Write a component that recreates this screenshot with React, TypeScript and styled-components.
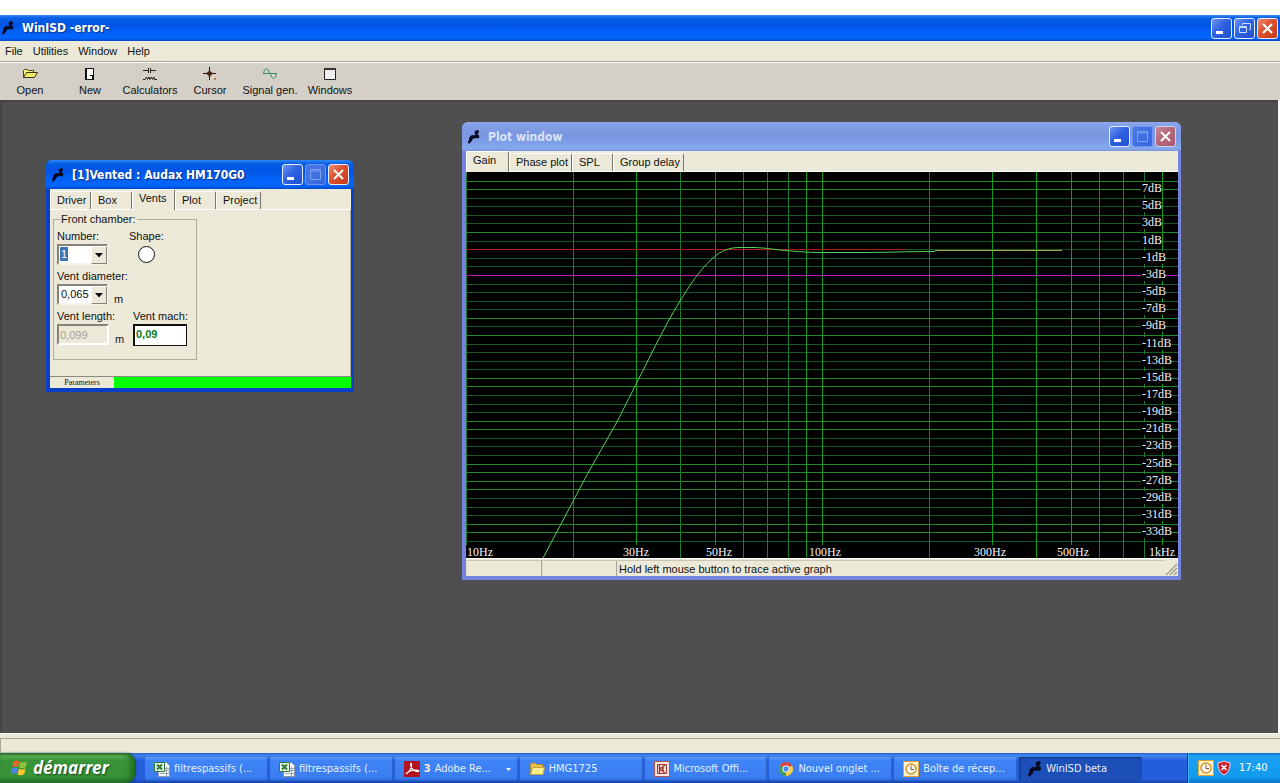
import React from "react";
import styled, { createGlobalStyle, css } from "styled-components";

const UI = '"Liberation Sans", Arial, sans-serif';
const TAHOMA = '"DejaVu Sans Condensed", Tahoma, sans-serif';
const FACE = "#ece9d8";

const GlobalStyle = createGlobalStyle`
  * { box-sizing: border-box; }
  body { margin: 0; background: #fff; font: 11px/14px ${UI}; color: #111; }
  button, input, select { font: inherit; color: inherit; margin: 0; }
`;

const Screen = styled.div`
  display: flex;
  flex-direction: column;
  min-height: 100vh;
  padding-top: 15px;
`;

/* ---------- window chrome ---------- */

const TitleBar = styled.header<{ $inactive?: boolean; $main?: boolean }>`
  display: flex;
  align-items: center;
  gap: 8px;
  height: ${(p) => (p.$main ? 26 : 29)}px;
  padding: 0 2px 0 ${(p) => (p.$main ? 2 : 3)}px;
  background: ${(p) =>
    p.$inactive
      ? "linear-gradient(#8fa9ec 0, #84a0ea 10%, #7a96df 40%, #7d9be6 65%, #86a9ec 90%, #7a94dd)"
      : "linear-gradient(#2f8bf5 0, #0a5fe8 12%, #0054e3 35%, #0361f8 65%, #0466fd 88%, #0048cc)"};
`;

const TitleText = styled.h1<{ $inactive?: boolean }>`
  flex: 1;
  margin: 0;
  font: bold 12px/16px ${TAHOMA};
  white-space: nowrap;
  color: ${(p) => (p.$inactive ? "#d8e4f8" : "#fff")};
  text-shadow: ${(p) => (p.$inactive ? "none" : "1px 1px 1px #0a2f8a")};
`;

const Controls = styled.div`
  display: flex;
  gap: 2px;
`;

const ControlButton = styled.button<{ $tone: "blue" | "dim" | "red" | "faded" }>`
  display: grid;
  place-items: center;
  width: 21px;
  height: 21px;
  padding: 0;
  border: 1px solid ${(p) => (p.$tone === "dim" ? "#6f93ee" : p.$tone === "faded" ? "#cfd2f0" : "#e6eeff")};
  border-radius: 3px;
  background: ${(p) =>
    ({
      blue: "linear-gradient(135deg, #6f95f2, #2f62e0 45%, #1f4fd0)",
      dim: "linear-gradient(135deg, #4a78e8, #3767dc)",
      red: "linear-gradient(135deg, #ea8d70, #dc5030 45%, #c23a18)",
      faded: "linear-gradient(135deg, #c58a9c, #b5687a 45%, #a85a70)",
    })[p.$tone]};
`;

const Frame = styled.section<{ $inactive?: boolean; $left: number; $top: number }>`
  position: absolute;
  left: ${(p) => p.$left}px;
  top: ${(p) => p.$top}px;
  overflow: hidden;
  border-radius: 6px 6px 0 0;
  padding: 0 3px 4px 4px;
  background: ${(p) => (p.$inactive ? "#7484dc" : "#0a3fc8")};
  ${TitleBar} {
    margin: 0 -3px 0 -4px;
    padding-left: 6px;
    padding-right: 5px;
  }
`;

const Client = styled.div`
  background: ${FACE};
`;

/* ---------- main window ---------- */

const MenuBar = styled.nav`
  display: flex;
  gap: 10px;
  height: 20px;
  padding: 0 5px;
  background: ${FACE};
`;

const MenuItem = styled.button`
  padding: 0;
  border: 0;
  background: none;
  line-height: 18px;
`;

const ToolBar = styled.div`
  display: grid;
  grid-auto-flow: column;
  grid-auto-columns: 60px;
  height: 39px;
  border-top: 1px solid #aca899;
  background: #d4d0c8;
  box-shadow: inset 0 1px #fff;
`;

const ToolButton = styled.button`
  display: flex;
  flex-direction: column;
  align-items: center;
  gap: 2px;
  padding: 5px 0 0;
  border: 0;
  background: none;
  white-space: nowrap;
`;

const Workspace = styled.main`
  position: relative;
  flex: 1;
  min-height: 500px;
  border: solid #fff;
  border-width: 0 2px 0 0;
  background: #4f4f4f;
  box-shadow: inset 2px 2px #45443f;
`;

const MainStatus = styled.footer`
  height: 20px;
  padding-top: 4px;
  background: ${FACE};
  border-top: 1px solid #fff;
  &::before {
    content: "";
    display: block;
    height: 15px;
    border: solid #aca899;
    border-width: 1px 0 0 1px;
  }
`;

/* ---------- tabs ---------- */

const Tabs = styled.div`
  display: flex;
  align-items: flex-end;
  height: 21px;
  border-bottom: 1px solid #fff;
`;

const Tab = styled.button<{ $active?: boolean }>`
  min-width: ${(p) => (p.$active ? 43 : 41)}px;
  height: ${(p) => (p.$active ? 21 : 18)}px;
  padding: 0 3px ${(p) => (p.$active ? 3 : 0)}px 6px;
  border: solid;
  border-width: 1px 1px 0 1px;
  border-color: #fff #77756a transparent #fff;
  border-radius: 2px 2px 0 0;
  background: ${FACE};
  text-align: left;
  line-height: 17px;
  white-space: nowrap;
  ${(p) => p.$active && css`margin-bottom: -1px;`}
`;

/* ---------- project window ---------- */

const ProjectPane = styled.div`
  width: 301px;
  height: 166px;
  padding: 2px 3px 0;
  border-right: 1px solid #aca899;
`;

const Group = styled.fieldset`
  display: flex;
  flex-direction: column;
  gap: 4px;
  width: 144px;
  margin: 0;
  padding: 3px 3px 13px;
  border: 1px solid #b0ad9c;
`;

const GroupLegend = styled.legend`
  margin-left: 3px;
  padding: 0 1px;
`;

const FieldRow = styled.div`
  display: flex;
`;

const Field = styled.div<{ $width?: number; $center?: boolean }>`
  display: flex;
  flex-direction: column;
  gap: 1px;
  width: ${(p) => (p.$width ? p.$width + "px" : "auto")};
  align-items: ${(p) => (p.$center ? "center" : "flex-start")};
  white-space: nowrap;
`;

const WithUnit = styled.div`
  display: flex;
  align-items: flex-end;
  gap: 6px;
  height: 21px;
  line-height: 12px;
`;

const Combo = styled.div`
  position: relative;
  width: 51px;
  height: 21px;
`;

const ComboSelect = styled.select<{ $highlight?: boolean }>`
  appearance: none;
  width: 100%;
  height: 100%;
  padding: 0 0 1px 2px;
  border: 2px solid;
  border-color: #85837a #f6f4ec #f6f4ec #85837a;
  border-radius: 0;
  outline: 0;
  line-height: 16px;
  color: ${(p) => (p.$highlight ? "#fff" : "#111")};
  background: ${(p) =>
    p.$highlight ? "linear-gradient(#3f74b8, #3f74b8) 1px 1px / 8px 14px no-repeat #fff" : "#fff"};
`;

const ComboArrow = styled.span`
  position: absolute;
  top: 2px;
  right: 1px;
  display: grid;
  place-items: center;
  width: 16px;
  height: 18px;
  pointer-events: none;
  border: 1px solid;
  border-color: #fff #85837a #85837a #fff;
  background: ${FACE};
`;

const LengthInput = styled.input`
  width: 52px;
  height: 21px;
  padding: 0 1px;
  border: 2px solid;
  border-color: #85837a #fff #fff #85837a;
  background: ${FACE};
  color: #a5a294;
`;

const MachInput = styled.input`
  width: 54px;
  height: 22px;
  padding: 0 1px 3px;
  border: solid #111;
  border-width: 2px 1px 1px 2px;
  background: #fff;
  color: #0a7a1a;
  font-weight: bold;
`;

const ShapeButton = styled.button`
  width: 17px;
  height: 17px;
  margin-top: 2px;
  padding: 0;
  border: 1px solid #111;
  border-radius: 50%;
  background: #fff;
`;

const ProjectStatus = styled.div`
  display: flex;
  height: 12px;
  border-top: 1px solid #8d8b80;
  background: #00ff00;
`;

const ParamCell = styled.span`
  width: 64px;
  background: ${FACE};
  font: 8px/12px "Liberation Serif", serif;
  text-align: center;
`;

/* ---------- plot window ---------- */

const Chart = styled.svg`
  display: block;
  background: #000;
  font: 12px "Liberation Serif", "Times New Roman", serif;
`;

const PlotStatus = styled.div`
  display: flex;
  align-items: center;
  height: 18px;
  border-top: 1px solid #fff;
`;

const StatusCell = styled.span<{ $width?: number }>`
  flex: ${(p) => (p.$width ? "none" : "1")};
  width: ${(p) => (p.$width ? p.$width + "px" : "auto")};
  height: 16px;
  padding-left: 1px;
  border: solid;
  border-width: 1px ${(p) => (p.$width ? 1 : 0)}px 0 1px;
  border-color: #c9c6b6 #aca899 #fff #e0ddcd;
  line-height: 17px;
`;

/* ---------- task bar ---------- */

const TaskBar = styled.footer`
  display: flex;
  height: 30px;
  background: linear-gradient(#2a5fc8 0, #3f86f0 8%, #245edb 25%, #245edb 88%, #1941a5);
  font: 11px/16px ${TAHOMA};
  color: #e4f0ff;
`;

const StartButton = styled.button`
  display: flex;
  align-items: center;
  gap: 4px;
  width: 135px;
  padding: 0 0 0 10px;
  border: 0;
  border-radius: 0 9px 9px 0;
  background: linear-gradient(#2c6f2a 0, #5fb55c 10%, #3a953a 25%, #379237 80%, #27702a);
  box-shadow: inset -4px 0 6px #1d6a20, 1px 0 2px #143c8c;
  font: italic bold 17px/24px "Noto Sans", sans-serif;
  color: #fff;
  text-shadow: 1px 1px 2px #1c4a1c;
`;

const TaskList = styled.div`
  display: flex;
  flex: 1;
  min-width: 0;
  gap: 2px;
  margin: 0 45px 0 10px;
  padding: 4px 0 2px;
`;

const Task = styled.button<{ $active?: boolean }>`
  display: flex;
  flex: 1;
  min-width: 0;
  align-items: center;
  gap: 4px;
  padding: 0 7px 0 9px;
  border: 0;
  border-radius: 2px;
  white-space: nowrap;
  background: ${(p) => (p.$active ? "#1c4fb8" : "linear-gradient(#5b9bfb 0, #3f84f6 15%, #3a7df0 85%, #2f6cdc)")};
  box-shadow: ${(p) => (p.$active ? "inset 1px 1px 2px #0f3583" : "inset -1px -1px 1px #2a62cc")};
`;

const TaskCount = styled.b`
  font-weight: bold;
  color: #f6ecd0;
`;

const TaskLabel = styled.span`
  flex: 1;
  text-align: left;
`;

const Tray = styled.div`
  display: flex;
  align-items: center;
  gap: 3px;
  width: 93px;
  padding-left: 10px;
  border-left: 1px solid #0b3f9c;
  background: linear-gradient(#0f6fc8 0, #1ba0f2 10%, #129aee 80%, #0d78c8);
  box-shadow: inset 1px 0 #38b4f8;
`;

const Clock = styled.time`
  margin-left: 5px;
  color: #fff;
`;

/* ---------- icons ---------- */

const Icon = ({ children, w = 16, h = 16 }: { children: React.ReactNode; w?: number; h?: number }) => (
  <svg width={w} height={h} viewBox={`0 0 ${w} ${h}`} fill="none" aria-hidden="true">
    {children}
  </svg>
);

const HornIcon = ({ size = 12 }: { size?: number }) => (
  <svg width={size} height={size + 2} viewBox="0 0 12 14" aria-hidden="true">
    <path d="M7 1l2.500-1 1.500 1-.5 2-1 1 1.500 1.500.3 2L10 8.500 8 8 6 8.500 4.500 9 4 11l-1.500 1L2 13.500H.500L0 11.500 1 10V8l2-2.500L5 5l1.500.5L7.500 4.500 6.500 3z" fill="#04081c" />
  </svg>
);

const Minimise = () => (
  <Icon w={15} h={15}><path d="M2 10h7v3H2z" fill="#fff" /></Icon>
);
const Maximise = () => (
  <Icon w={15} h={15}><path d="M2.500 2.500h10v10h-10zM2 4h11" stroke="#7aa0f0" /></Icon>
);
const Restore = () => (
  <Icon w={15} h={15}><path d="M5.500 4V2.500h8v6H12M2.500 5.500h7v6h-7zM2.500 6.500h7" stroke="#c8dcff" /></Icon>
);
const Close = () => (
  <Icon w={15} h={15}><path d="M3 3l9 9M12 3l-9 9" stroke="#fff" strokeWidth="2" /></Icon>
);

const OpenIcon = () => (
  <Icon w={16} h={14}>
    <path d="M1.500 10.500v-7l1-1h3l1 1h5v2" stroke="#4a4408" fill="#f6f08a" />
    <path d="M1.500 10.500l3-5h11l-3 5z" stroke="#3a3608" fill="#efe770" />
  </Icon>
);
const NewIcon = () => (
  <Icon w={16} h={14}>
    <path d="M3.500 1.500h8v11h-8z" stroke="#111" fill="#fff" />
    <path d="M3 1h2v12H3z" fill="#111" />
    <path d="M8 8h4v5H8z" fill="#111" /><path d="M8 9h2v3H8z" fill="#fff" />
  </Icon>
);
const CalcIcon = () => (
  <Icon w={16} h={14}>
    <path d="M1 3.500h5M9 3.500h5M6.500 1v5M8.500 1v5" stroke="#222" />
    <path d="M1 12.500h2l1.500-2.500 1 2.500L7 10l1 2.500L9.500 10l1 2.500L12 10l.5 2.500H15" stroke="#222" />
  </Icon>
);
const CursorIcon = () => (
  <Icon w={16} h={14}>
    <path d="M7.500 0v13M1 6.500h13" stroke="#2a1408" />
    <path d="M7.500 2.500L9 5l3 1.500L9 8l-1.500 3L6 8 3 6.500 6 5z" fill="#4a2410" />
    <path d="M12 11h2v2h-2z" fill="#c07a50" />
  </Icon>
);
const SignalIcon = () => (
  <Icon w={16} h={14}>
    <path d="M1 6.500h14" stroke="#3b8c66" />
    <path d="M1.500 6.500L2.500 3 4.500 1.500 6.500 3 7.500 6.500M8.500 6.500l1 3.500 2 1.500 2-1.500 1-3.500" stroke="#3b8c66" />
  </Icon>
);
const WindowsIcon = () => (
  <Icon w={16} h={14}>
    <path d="M2.500 1.500h11v11h-11z" stroke="#222" fill="#eee" /><path d="M2 1h12v2H2z" fill="#333" />
  </Icon>
);

const FlagIcon = () => (
  <Icon w={19} h={18}>
    <path d="M3.500 2.500C5.500 1 7.500 1.200 9.200 2.200L8 8C6.200 7 4.300 7 2.300 8.200z" fill="#f0652a" />
    <path d="M10.300 2.800c2 1 4.500 1 6.700-.3L15.700 8.300c-2.200 1.400-4.400 1.300-6.600.3z" fill="#8cc63a" />
    <path d="M2 9.400c2-1.200 4-1.300 5.800-.2L6.500 15C4.700 14 2.700 14 .7 15.200z" fill="#4a86e8" />
    <path d="M8.900 9.800c2 1 4.300 1.100 6.600-.2l-1.300 5.700c-2.200 1.400-4.500 1.300-6.600.3z" fill="#fcc52c" />
  </Icon>
);
const SheetIcon = () => (
  <Icon>
    <path d="M4.500 1.500h8l3 3v11h-11z" fill="#f4f6f8" stroke="#8a96a8" />
    <path d="M11 7.500h4M11 9.500h4M6 12.500h9M12.500 6v9" stroke="#9aa6b4" />
    <path d="M.5 1.500h10v9H.5z" fill="#e8f4e6" stroke="#2f7a38" />
    <path d="M3 3.500l5 5M8 3.500l-5 5" stroke="#2f7a38" strokeWidth="2" />
  </Icon>
);
const AcrobatIcon = () => (
  <Icon>
    <path d="M0 0h16v16H0z" fill="#b5121b" />
    <path d="M2 13c3-2 6-6 5.500-10C7 1.500 6 3 7 5.500S11 11 14 10.500 12 8.500 8 9.500 3 11.500 2 13z" stroke="#fff" strokeWidth="1.200" />
  </Icon>
);
const FolderIcon = () => (
  <Icon>
    <path d="M1.500 3.500l1-1.500h4l1.500 1.500h6v10h-12z" fill="#e8c050" stroke="#b08a28" />
    <path d="M1.500 13.500l2-7h12l-1.500 7z" fill="#fdf08c" stroke="#c8a238" />
  </Icon>
);
const OfficeIcon = () => (
  <Icon>
    <path d="M.5.5h15v15H.5z" fill="#f8e6e2" stroke="#b8504a" />
    <path d="M3.500 3.500h9v9h-9z" stroke="#a83830" />
    <path d="M5.500 12V4M6 8l5-4M6 8l5 4M9 6v4" stroke="#a83830" strokeWidth="1.500" />
  </Icon>
);
const ChromeIcon = () => (
  <Icon>
    <path d="M8 8L1.900 4.500A7 7 0 0 1 14.100 4.500z" fill="#e0453a" />
    <path d="M8 8l6.100-3.500A7 7 0 0 1 8 15z" fill="#f8cc3a" />
    <path d="M8 8v7A7 7 0 0 1 1.900 4.500z" fill="#3f9f52" />
    <circle cx="8" cy="8" r="3.200" fill="#4688f0" stroke="#fff" />
  </Icon>
);
const OutlookIcon = () => (
  <Icon>
    <path d="M.5.5h15v15H.5z" fill="#fff4cc" stroke="#e0a030" />
    <circle cx="8" cy="8" r="5" stroke="#d8922a" strokeWidth="1.500" fill="#fffdf2" />
    <path d="M8 4.500V8.500h3" stroke="#7a5a28" />
  </Icon>
);
const ShieldIcon = () => (
  <Icon w={14} h={16}>
    <path d="M7 1c2 1 4 1.500 6 1.500 0 6-1 10-6 12.500C2 12.500 1 8.500 1 2.500 3 2.500 5 2 7 1z" fill="#cc2230" stroke="#f0d8dc" />
    <path d="M4.500 5l5 5M9.500 5l-5 5" stroke="#fff" strokeWidth="1.500" />
  </Icon>
);

/* ---------- data ---------- */

const MENUS = ["File", "Utilities", "Window", "Help"];

const TOOLS: [string, () => React.JSX.Element][] = [
  ["Open", OpenIcon],
  ["New", NewIcon],
  ["Calculators", CalcIcon],
  ["Cursor", CursorIcon],
  ["Signal gen.", SignalIcon],
  ["Windows", WindowsIcon],
];

const TASKS: { label: string; icon: React.ReactNode; count?: number; active?: boolean }[] = [
  { label: "filtrespassifs (...", icon: <SheetIcon /> },
  { label: "filtrespassifs (...", icon: <SheetIcon /> },
  { label: "Adobe Re...", icon: <AcrobatIcon />, count: 3 },
  { label: "HMG1725", icon: <FolderIcon /> },
  { label: "Microsoft Offi...", icon: <OfficeIcon /> },
  { label: "Nouvel onglet ...", icon: <ChromeIcon /> },
  { label: "Boîte de récep...", icon: <OutlookIcon /> },
  { label: "WinISD beta", icon: <HornIcon size={14} />, active: true },
];

const PLOT_W = 712;
const PLOT_H = 386;
const DECADE = 356;
const xOf = (hz: number) => Math.round(Math.log10(hz / 10) * DECADE);
const yOf = (db: number) => Math.round(((9 - db) * PLOT_H) / 45);

const FREQS = [10, 20, 30, 40, 50, 60, 70, 80, 90, 100, 200, 300, 400, 500, 600, 700, 800, 900];
const STRONG_FREQS = [30, 90, 100, 300, 400, 500, 900];
const LEVELS = Array.from({ length: 43 }, (_, i) => 8 - i).filter((db) => db !== -3);
const STRONG_LEVELS = [8, 7, 2, -8, -10, -15, -16, -20, -21, -25, -26, -27, -28, -32, -33];
const DB_LABELS = Array.from({ length: 21 }, (_, i) => 7 - 2 * i);
const HZ_LABELS: [string, number, number][] = [
  ["10Hz", 1, 28],
  ["30Hz", 157, 28],
  ["50Hz", 240, 28],
  ["100Hz", 343, 34],
  ["300Hz", 508, 34],
  ["500Hz", 591, 34],
  ["1kHz", 683, 28],
];

const CURVE =
  "M77 386L122 301 152 248 162 228C182 189 198 155 214 129 224 113 230 104 238 95 247 85 256 76 272 75.500H288C300 76 306 77 314 78 325 79 340 80.500 357 80.500H396C420 80.500 440 79.500 469 79.500";

/* ---------- components ---------- */

function WindowControls({ restore, inactive }: { restore?: boolean; inactive?: boolean }) {
  return (
    <Controls>
      <ControlButton $tone="blue" aria-label="Minimise"><Minimise /></ControlButton>
      <ControlButton $tone={restore ? "blue" : "dim"} aria-label={restore ? "Restore" : "Maximise"}>
        {restore ? <Restore /> : <Maximise />}
      </ControlButton>
      <ControlButton $tone={inactive ? "faded" : "red"} aria-label="Close"><Close /></ControlButton>
    </Controls>
  );
}

function TabStrip({ names, active }: { names: string[]; active: string }) {
  return (
    <Tabs role="tablist">
      {names.map((name) => (
        <Tab key={name} role="tab" aria-selected={name === active} $active={name === active}>
          {name}
        </Tab>
      ))}
    </Tabs>
  );
}

function ComboBox({ id, value, highlight }: { id: string; value: string; highlight?: boolean }) {
  return (
    <Combo>
      <ComboSelect id={id} $highlight={highlight} defaultValue={value}>
        <option>{value}</option>
      </ComboSelect>
      <ComboArrow>
        <Icon w={8} h={5}><path d="M0 0h8L4 4.500z" fill="#111" /></Icon>
      </ComboArrow>
    </Combo>
  );
}

function ProjectWindow() {
  return (
    <Frame $left={46} $top={60}>
      <TitleBar>
        <HornIcon />
        <TitleText as="h2">[1]Vented : Audax HM170G0</TitleText>
        <WindowControls />
      </TitleBar>
      <Client>
        <TabStrip names={["Driver", "Box", "Vents", "Plot", "Project"]} active="Vents" />
        <ProjectPane>
          <Group>
            <GroupLegend>Front chamber:</GroupLegend>
            <FieldRow>
              <Field $width={72}>
                <label htmlFor="number">Number:</label>
                <ComboBox id="number" value="1" highlight />
              </Field>
              <Field $center>
                <label htmlFor="shape">Shape:</label>
                <ShapeButton id="shape" />
              </Field>
            </FieldRow>
            <Field>
              <label htmlFor="diameter">Vent diameter:</label>
              <WithUnit>
                <ComboBox id="diameter" value="0,065" />
                m
              </WithUnit>
            </Field>
            <FieldRow>
              <Field $width={76}>
                <label htmlFor="length">Vent length:</label>
                <WithUnit>
                  <LengthInput id="length" defaultValue="0,099" readOnly />
                  m
                </WithUnit>
              </Field>
              <Field>
                <label htmlFor="mach">Vent mach:</label>
                <MachInput id="mach" defaultValue="0,09" readOnly />
              </Field>
            </FieldRow>
          </Group>
        </ProjectPane>
        <ProjectStatus>
          <ParamCell>Parameters</ParamCell>
        </ProjectStatus>
      </Client>
    </Frame>
  );
}

function GainChart() {
  return (
    <Chart width={PLOT_W} height={PLOT_H} viewBox={`0 0 ${PLOT_W} ${PLOT_H}`} role="img" aria-label="Gain">
      <g shapeRendering="crispEdges">
        {LEVELS.map((db) => (
          <rect key={db} x="0" y={yOf(db)} width={PLOT_W} height="1" fill={STRONG_LEVELS.includes(db) ? "#1f8a28" : "#175a26"} />
        ))}
        {FREQS.map((hz) => (
          <rect key={hz} x={xOf(hz)} y="0" width="1" height={PLOT_H} fill={STRONG_FREQS.includes(hz) ? "#109a18" : "#1f7a30"} />
        ))}
      </g>
      <path d={`M0 ${yOf(0) + 0.5}H440`} stroke="#b01c1c" />
      <path d={`M0 ${yOf(-3) + 0.5}H${PLOT_W}`} stroke="#b01cb0" />
      <path d={CURVE} fill="none" stroke="#4fd455" />
      <path d={`M469 ${yOf(0) + 1.5}H596`} stroke="#b0a440" />
      {DB_LABELS.map((db) => (
        <g key={db}>
          <rect x="675" y={yOf(db) - 7} width={db > 0 ? 21 : db > -10 ? 25 : 31} height="13" fill="#000" />
          <text x="676" y={yOf(db) + 3} fill="#f2f2f2">{db}dB</text>
        </g>
      ))}
      {HZ_LABELS.map(([text, x, width]) => (
        <g key={text}>
          <rect x={x - 1} y="373" width={width} height="13" fill="#000" />
          <text x={x} y="384" fill="#f2f2f2">{text}</text>
        </g>
      ))}
    </Chart>
  );
}

function PlotWindow() {
  return (
    <Frame $inactive $left={462} $top={22}>
      <TitleBar $inactive>
        <HornIcon />
        <TitleText as="h2" $inactive>Plot window</TitleText>
        <WindowControls inactive />
      </TitleBar>
      <Client>
        <TabStrip names={["Gain", "Phase plot", "SPL", "Group delay"]} active="Gain" />
        <GainChart />
        <PlotStatus>
          <StatusCell $width={76} />
          <StatusCell $width={75} />
          <StatusCell>Hold left mouse button to trace active graph</StatusCell>
          <Icon w={13} h={16}><path d="M1 15L12 4M5 15l7-7M9 15l3-3" stroke="#a5a28c" strokeWidth="1.500" /></Icon>
        </PlotStatus>
      </Client>
    </Frame>
  );
}

export default function App() {
  return (
    <>
      <GlobalStyle />
      <Screen>
        <TitleBar $main>
          <HornIcon />
          <TitleText>WinISD -error-</TitleText>
          <WindowControls restore />
        </TitleBar>
        <MenuBar>
          {MENUS.map((name) => (
            <MenuItem key={name}>{name}</MenuItem>
          ))}
        </MenuBar>
        <ToolBar>
          {TOOLS.map(([name, Glyph]) => (
            <ToolButton key={name}>
              <Glyph />
              {name}
            </ToolButton>
          ))}
        </ToolBar>
        <Workspace>
          <ProjectWindow />
          <PlotWindow />
        </Workspace>
        <MainStatus />
        <TaskBar>
          <StartButton>
            <FlagIcon />
            démarrer
          </StartButton>
          <TaskList>
            {TASKS.map((task, i) => (
              <Task key={i} $active={task.active}>
                {task.icon}
                {task.count && <TaskCount>{task.count}</TaskCount>}
                <TaskLabel>{task.label}</TaskLabel>
                {task.count && <Icon w={5} h={3}><path d="M0 0h5L2.500 3z" fill="#fff" /></Icon>}
              </Task>
            ))}
          </TaskList>
          <Tray>
            <OutlookIcon />
            <ShieldIcon />
            <Clock>17:40</Clock>
          </Tray>
        </TaskBar>
      </Screen>
    </>
  );
}
